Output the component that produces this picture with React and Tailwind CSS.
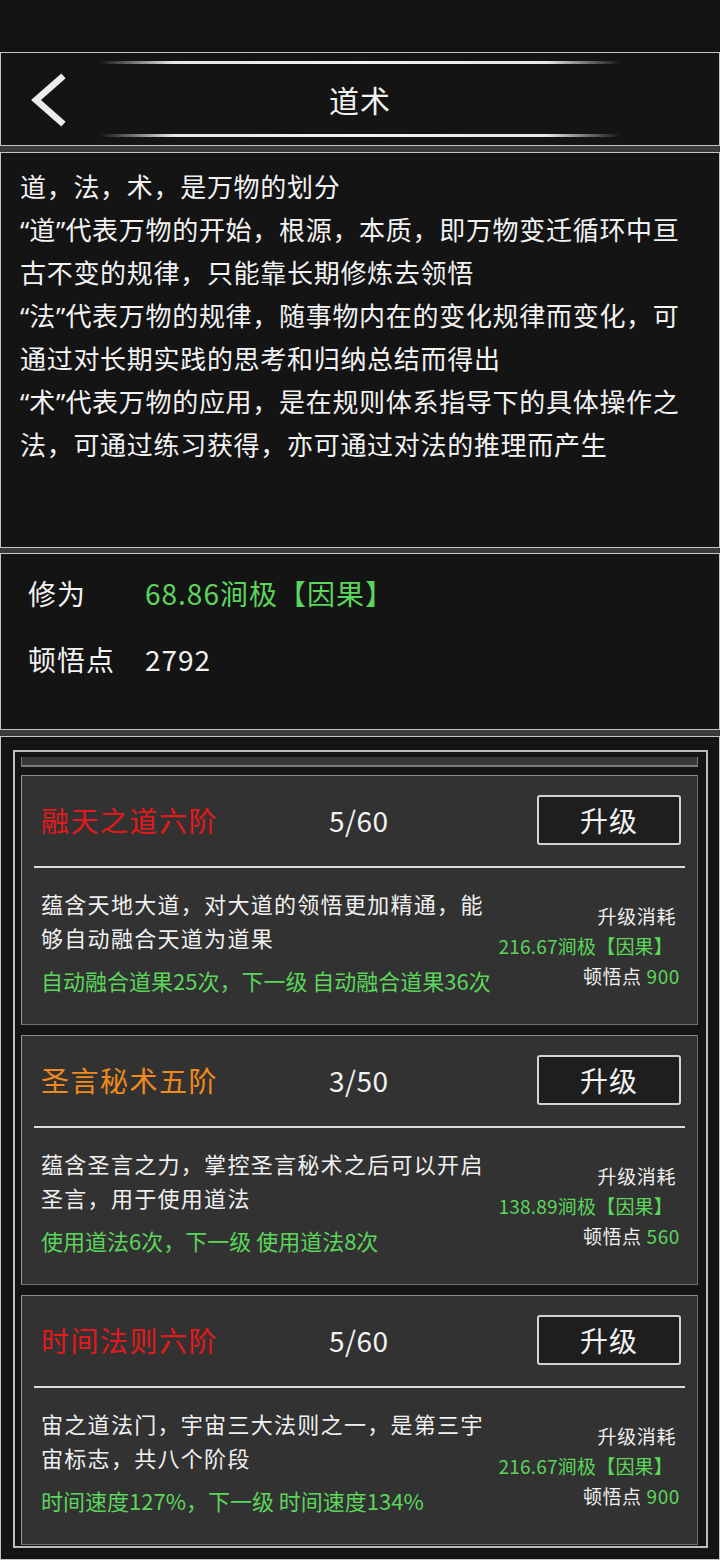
import React from "react";

const skills = [
  {
    name: "融天之道六阶",
    color: "text-[#e3191c]",
    level: "5/60",
    desc: "蕴含天地大道，对大道的领悟更加精通，能够自动融合天道为道果",
    effect: "自动融合道果25次，下一级 自动融合道果36次",
    cost: "216.67涧极【因果】",
    points: 900,
  },
  {
    name: "圣言秘术五阶",
    color: "text-[#f08a1c]",
    level: "3/50",
    desc: "蕴含圣言之力，掌控圣言秘术之后可以开启圣言，用于使用道法",
    effect: "使用道法6次，下一级 使用道法8次",
    cost: "138.89涧极【因果】",
    points: 560,
  },
  {
    name: "时间法则六阶",
    color: "text-[#e3191c]",
    level: "5/60",
    desc: "宙之道法门，宇宙三大法则之一，是第三宇宙标志，共八个阶段",
    effect: "时间速度127%，下一级 时间速度134%",
    cost: "216.67涧极【因果】",
    points: 900,
  },
];

// narrow western quotes, the CJK font draws them full width
const Q = ({ children }) => (
  <span className="font-['Noto_Sans',sans-serif] leading-none tracking-normal">{children}</span>
);

const GlowLine = () => (
  <div className="mx-auto h-[3px] w-[520px] bg-[linear-gradient(90deg,transparent,#e6e6e6_14%,#f2f2f2_50%,#e6e6e6_86%,transparent)]" />
);

const SkillCard = ({ skill }) => (
  <div className="h-[250px] border border-[#6f6f6f] border-t-[#8a8a8a] border-l-[#9a9a9a] bg-[#323232]">
    <div className="flex h-[88px] items-center pl-[19px] pr-4">
      <div className={`w-[288px] text-[28px] tracking-[1.5px] ${skill.color}`}>
        {skill.name}
      </div>
      <div className="w-[110px] text-[28px] tracking-[0.5px] text-[#f2f2f2]">
        {skill.level}
      </div>
      <button className="ml-auto flex h-[50px] w-[144px] items-center justify-center rounded-[3px] border-2 border-[#d4d4d4] bg-[#1e1e1e] text-[28px] tracking-[1px] text-[#f2f2f2]">
        升级
      </button>
    </div>
    <div className="mx-3 mt-[2px] h-[2px] bg-[#dcdcdc]" />
    <div className="flex items-center pl-[19px] pr-[17px] pt-[18px]">
      <div className="w-[452px]">
        <div className="text-[22px] leading-[34px] tracking-[1.3px] text-[#f0f0f0]">
          {skill.desc}
        </div>
        <div className="mt-[9px] whitespace-nowrap text-[22px] leading-[34px] tracking-[0px] text-[#5bd65b]">
          {skill.effect}
        </div>
      </div>
      <div className="ml-auto pt-[8px] text-right text-[19px] leading-[30px] tracking-[0.6px]">
        <div className="pr-[4px] text-[#f0f0f0]">升级消耗</div>
        <div className="pr-[7px] tracking-[0.2px] text-[#5bd65b]">{skill.cost}</div>
        <div className="text-[#f0f0f0]">
          顿悟点 <span className="text-[#5bd65b]">{skill.points}</span>
        </div>
      </div>
    </div>
  </div>
);

export default function App() {
  return (
    <div className="h-[1560px] w-[720px] overflow-hidden bg-[#121212] font-['Noto_Sans_CJK_SC',sans-serif] text-[#f2f2f2]">
      <div className="h-[52px]" />

      <div className="flex h-[94px] flex-col justify-between border border-[#c4c4c4] bg-[#141414] py-[8px]">
        <GlowLine />
        <div className="relative flex h-[56px] items-center justify-center">
          <svg
            className="absolute left-[23px] top-[2px]"
            width="42"
            height="54"
            viewBox="0 0 42 54"
            fill="none"
          >
            <polyline
              points="37,5 12,27 37,49"
              stroke="#ececec"
              strokeWidth="6.5"
              strokeLinecap="square"
            />
          </svg>
          <span className="text-[30px] tracking-[1px]">道术</span>
        </div>
        <GlowLine />
      </div>

      <div className="h-[6px] bg-[#3a3a3a]" />

      <div className="h-[396px] border border-[#c4c4c4] bg-[#141414] pl-[19px] pr-[14px] pt-[11px] text-[26px] leading-[43px] tracking-[0.7px]">
        <p>道，法，术，是万物的划分</p>
        <p>
          <Q>“</Q>道<Q>”</Q>代表万物的开始，根源，本质，即万物变迁循环中亘古不变的规律，只能靠长期修炼去领悟
        </p>
        <p>
          <Q>“</Q>法<Q>”</Q>代表万物的规律，随事物内在的变化规律而变化，可通过对长期实践的思考和归纳总结而得出
        </p>
        <p>
          <Q>“</Q>术<Q>”</Q>代表万物的应用，是在规则体系指导下的具体操作之法，可通过练习获得，亦可通过对法的推理而产生
        </p>
      </div>

      <div className="h-[5px] bg-[#3a3a3a]" />

      <div className="h-[177px] border border-[#c4c4c4] bg-[#141414] pl-[27px] pt-[18px] text-[28px] leading-[43px] tracking-[1px]">
        <div className="flex">
          <span className="w-[117px]">修为</span>
          <span className="text-[#5bd65b]">68.86涧极【因果】</span>
        </div>
        <div className="mt-[23px] flex">
          <span className="w-[117px]">顿悟点</span>
          <span>2792</span>
        </div>
      </div>

      <div className="h-[6px] bg-[#3a3a3a]" />

      <div className="h-[824px] border border-[#c4c4c4] bg-[#141414] pl-[12px] pr-[11px] pt-[13px]">
        <div className="h-[798px] overflow-hidden border-2 border-[#bdbdbd] bg-[#151515] pl-[6px] pr-[8px] pt-[5px]">
          <div className="h-[10px] border-x border-b-2 border-[#7a7a7a] bg-[#383838]" />
          <div className="mt-[8px] flex flex-col gap-[10px]">
            {skills.map((skill) => (
              <SkillCard key={skill.name} skill={skill} />
            ))}
          </div>
        </div>
      </div>
    </div>
  );
}
